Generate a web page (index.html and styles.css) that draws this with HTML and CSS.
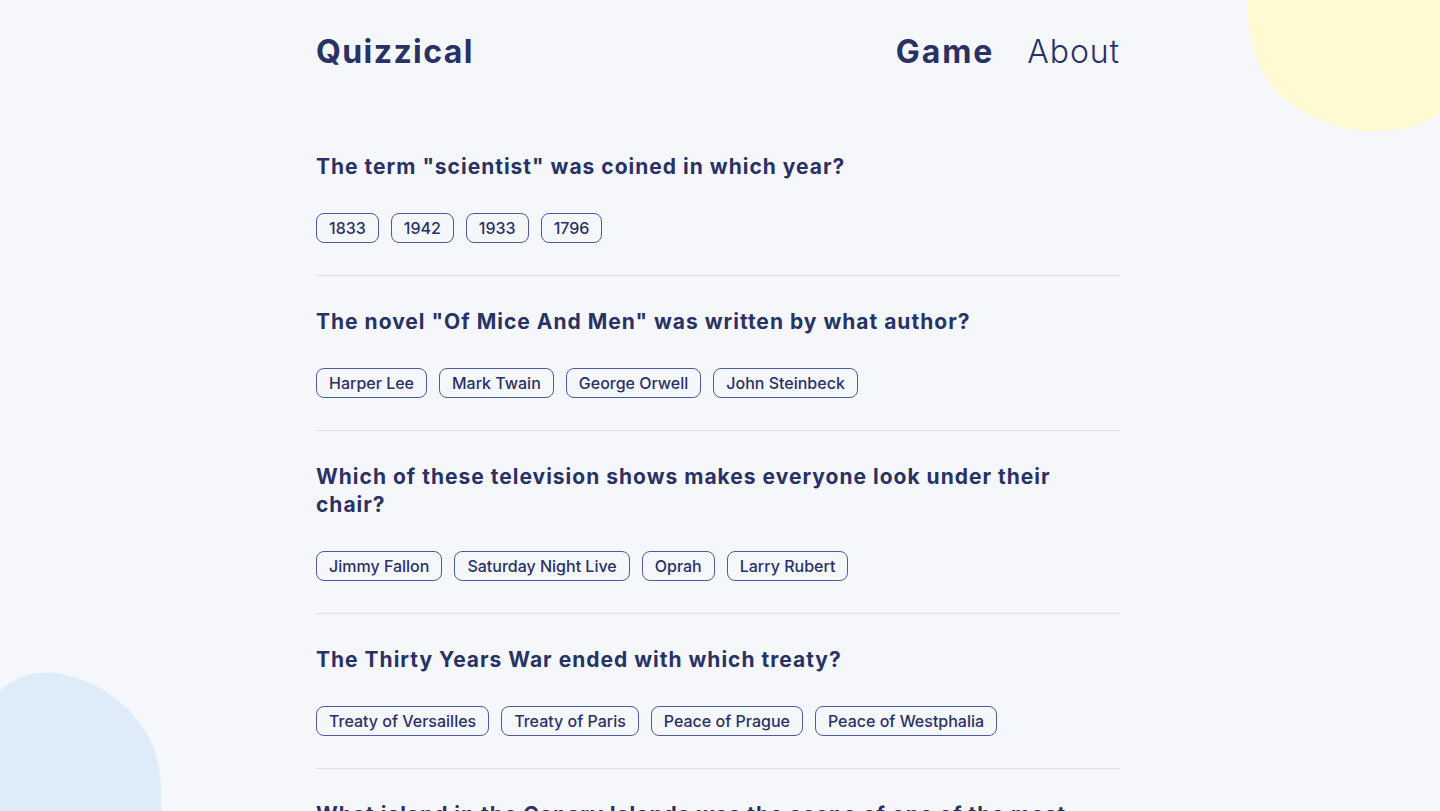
FILE: index.html
```html
<!DOCTYPE html>
<html lang="en">
<head>
<meta charset="utf-8">
<title>Quizzical</title>
<link rel="stylesheet" href="styles.css">
</head>
<body>
<svg class="blob blob-yellow" width="200" height="140" viewBox="0 0 200 140" aria-hidden="true">
  <path d="M7 0 C8 28 12 55 28 80 C48 108 85 128 125 131 C160 133 185 124 200 112 L200 0 Z" fill="#FFFAD1"/>
</svg>
<svg class="blob blob-blue" width="170" height="140" viewBox="0 0 170 140" aria-hidden="true">
  <path d="M0 20 C15 5 35 0 55 2 C100 8 140 40 155 80 C161 100 162 120 161 140 L0 140 Z" fill="#DEEBF8"/>
</svg>
<div class="page">
  <header class="header">
    <h1 class="logo">Quizzical</h1>
    <nav class="nav">
      <a class="nav-link active" href="#">Game</a>
      <a class="nav-link" href="#">About</a>
    </nav>
  </header>
  <main class="quiz">
    <section class="question">
      <h2 class="q-text">The term "scientist" was coined in which year?</h2>
      <div class="answers">
        <button class="answer">1833</button>
        <button class="answer">1942</button>
        <button class="answer">1933</button>
        <button class="answer">1796</button>
      </div>
    </section>
    <section class="question">
      <h2 class="q-text">The novel "Of Mice And Men" was written by what author?</h2>
      <div class="answers">
        <button class="answer">Harper Lee</button>
        <button class="answer">Mark Twain</button>
        <button class="answer">George Orwell</button>
        <button class="answer">John Steinbeck</button>
      </div>
    </section>
    <section class="question">
      <h2 class="q-text">Which of these television shows makes everyone look under their chair?</h2>
      <div class="answers">
        <button class="answer">Jimmy Fallon</button>
        <button class="answer">Saturday Night Live</button>
        <button class="answer">Oprah</button>
        <button class="answer">Larry Rubert</button>
      </div>
    </section>
    <section class="question">
      <h2 class="q-text">The Thirty Years War ended with which treaty?</h2>
      <div class="answers">
        <button class="answer">Treaty of Versailles</button>
        <button class="answer">Treaty of Paris</button>
        <button class="answer">Peace of Prague</button>
        <button class="answer">Peace of Westphalia</button>
      </div>
    </section>
    <section class="question">
      <h2 class="q-text">What island in the Canary Islands was the scene of one of the most deadly air disasters?</h2>
      <div class="answers">
        <button class="answer">Tenerife</button>
        <button class="answer">Gran Canaria</button>
        <button class="answer">Lanzarote</button>
        <button class="answer">Fuerteventura</button>
      </div>
    </section>
  </main>
</div>
</body>
</html>
```

FILE: styles.css
```css
* { box-sizing: border-box; }
html, body { margin: 0; padding: 0; }
body {
  background: #F5F7FB;
  color: #293264;
  font-family: Inter, "Noto Sans", sans-serif;
  padding-right: 4px;
  overflow-x: hidden;
}
.blob { position: fixed; z-index: 0; pointer-events: none; }
.blob-yellow { top: 0; right: 0; }
.blob-blue { left: 0; bottom: 0; }
.page {
  position: relative;
  z-index: 1;
  width: 804px;
  margin: 0 auto;
}
.header {
  display: flex;
  justify-content: space-between;
  align-items: center;
  padding: 32px 0 49px;
}
.logo {
  margin: 0;
  font-size: 32px;
  line-height: 40px;
  font-weight: 700;
  letter-spacing: 1.4px;
}
.nav { display: flex; gap: 33px; }
.nav-link {
  color: #293264;
  text-decoration: none;
  font-size: 32px;
  line-height: 40px;
  font-weight: 300;
  letter-spacing: 0.9px;
}
.nav-link.active { font-weight: 700; letter-spacing: 1.9px; }
.question {
  padding: 32px 0 32px;
  border-bottom: 1px solid #DBDEF0;
}
.q-text {
  margin: 0 0 32px;
  font-size: 21px;
  line-height: 28px;
  font-weight: 700;
  letter-spacing: 1px;
}
.answers { display: flex; gap: 12px; flex-wrap: wrap; }
.answer {
  height: 30px;
  padding: 0 12px;
  border: 1px solid #4D5B9E;
  border-radius: 8px;
  background: transparent;
  color: #293264;
  font-family: Inter, "Noto Sans", sans-serif;
  font-size: 16px;
  font-weight: 500;
}
```
